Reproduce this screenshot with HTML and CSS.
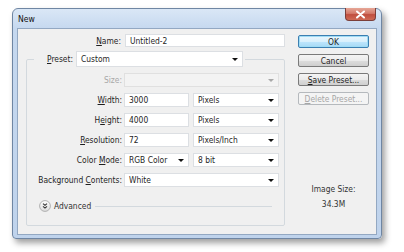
FILE: index.html
```html
<!DOCTYPE html>
<html>
<head>
<meta charset="utf-8">
<link rel="stylesheet" href="styles.css">
</head>
<body>
<div class="window">
  <div class="titlebar">
    <span class="title">New</span>
    <span class="close"><svg width="11" height="9" viewBox="0 0 11 9"><path d="M2 1.5 L9 7.5 M9 1.5 L2 7.5" stroke="#fff" stroke-width="2" stroke-linecap="round"/></svg></span>
  </div>
  <div class="client">
    <div class="main">
      <div class="name-row">
        <span class="lbl name-lbl"><u>N</u>ame:</span>
        <div class="field name-input">Untitled-2</div>
      </div>
      <fieldset class="group">
        <legend class="legend">
          <span class="lbl preset-lbl"><u>P</u>reset:</span>
          <div class="field select preset-select"><span>Custom</span><i class="arrow"></i></div>
        </legend>
        <div class="rows">
          <div class="row">
            <span class="lbl row-lbl dim">Size:</span>
            <div class="field select wide off"><span></span><i class="arrow"></i></div>
          </div>
          <div class="row">
            <span class="lbl row-lbl"><u>W</u>idth:</span>
            <div class="field small">3000</div>
            <div class="field select unit"><span>Pixels</span><i class="arrow"></i></div>
          </div>
          <div class="row">
            <span class="lbl row-lbl">H<u>e</u>ight:</span>
            <div class="field small">4000</div>
            <div class="field select unit"><span>Pixels</span><i class="arrow"></i></div>
          </div>
          <div class="row">
            <span class="lbl row-lbl"><u>R</u>esolution:</span>
            <div class="field small">72</div>
            <div class="field select unit"><span>Pixels/Inch</span><i class="arrow"></i></div>
          </div>
          <div class="row">
            <span class="lbl row-lbl">Color <u>M</u>ode:</span>
            <div class="field select small"><span>RGB Color</span><i class="arrow"></i></div>
            <div class="field select unit"><span>8 bit</span><i class="arrow"></i></div>
          </div>
          <div class="row">
            <span class="lbl row-lbl">Background <u>C</u>ontents:</span>
            <div class="field select wide"><span>White</span><i class="arrow"></i></div>
          </div>
        </div>
        <div class="advanced">
          <svg class="adv-icon" width="12" height="12" viewBox="0 0 12 12">
            <defs><linearGradient id="g" x1="0" y1="0" x2="0" y2="1"><stop offset="0" stop-color="#ffffff"/><stop offset="1" stop-color="#dcdcdc"/></linearGradient></defs>
            <circle cx="6" cy="6" r="5.4" fill="url(#g)" stroke="#a9a9a9" stroke-width="0.9"/>
            <path d="M4 3.6 L6 5.3 L8 3.6 M4 6.4 L6 8.1 L8 6.4" fill="none" stroke="#333" stroke-width="1.1"/>
          </svg>
          <span class="adv-text">Advanced</span>
          <span class="adv-line"></span>
        </div>
      </fieldset>
    </div>
    <div class="side">
      <div class="btn default">OK</div>
      <div class="btn">Cancel</div>
      <div class="btn"><u>S</u>ave Preset...</div>
      <div class="btn disabled"><u>D</u>elete Preset...</div>
      <div class="imgsize">Image Size:</div>
      <div class="imgval">34.3M</div>
    </div>
  </div>
</div>
</body>
</html>
```

FILE: styles.css
```css
* { box-sizing: border-box; }
html, body { margin: 0; padding: 0; background: #ffffff; }
body {
  font-family: "DejaVu Sans Condensed", "DejaVu Sans", sans-serif;
  font-stretch: condensed;
  font-size: 8.4px;
  color: #1e1e1e;
  width: 404px;
  height: 252px;
  overflow: hidden;
}
u { text-decoration: underline; text-underline-offset: 1px; }

.window {
  margin: 8px 0 0 12px;
  width: 370px;
  height: 231px;
  border: 1px solid #6f86a3;
  border-radius: 6px 6px 4px 4px;
  background: linear-gradient(#dae7f6 0px, #c5d8ef 20px, #bfd3ec 100%);
  box-shadow: 3px 4px 6px rgba(0,0,0,0.38);
  display: flex;
  flex-direction: column;
}
.titlebar {
  height: 19px;
  display: flex;
  justify-content: space-between;
  align-items: flex-start;
  padding: 0 5px 0 5px;
}
.title { padding-top: 5px; font-size: 8.6px; line-height: 10px; color: #111; }
.close {
  width: 31px;
  height: 13px;
  margin-top: -1px;
  border: 1px solid #7b3f3a;
  border-top: none;
  border-radius: 0 0 4px 4px;
  background: linear-gradient(#e6a797 0%, #d47a6a 45%, #c04e3e 55%, #cf6a55 100%);
  display: flex;
  align-items: center;
  justify-content: center;
}
.client {
  margin: 0 4px 3px 4px;
  height: 207px;
  border: 1px solid #93a8c2;
  background: #f0f0f0;
  display: flex;
}
.main { width: 268px; }
.name-row {
  display: flex;
  align-items: center;
  margin-top: 5px;
  height: 13px;
}
.lbl { white-space: nowrap; line-height: 10px; }
.name-lbl { width: 103px; text-align: right; margin-right: 4px; }
.field {
  height: 14px;
  background: #ffffff;
  border: 1px solid #dcdfe3;
  display: flex;
  align-items: center;
  padding-left: 4px;
  white-space: nowrap;
  line-height: 10px;
}
.name-input { width: 160px; height: 13px; }

.group {
  margin: 4px 0 0 8px;
  width: 259px;
  padding: 6px 0 13px 0;
  border: 1px solid #d3d9de;
  border-radius: 2px;
}
.legend {
  margin-left: 7px;
  padding: 0 2px;
  display: flex;
  align-items: center;
}
.preset-lbl { width: 37px; text-align: right; margin-right: 3px; }
.preset-select { width: 167px; height: 16px; }

.select { justify-content: space-between; padding-right: 4px; }
.arrow {
  width: 0; height: 0;
  border-left: 3px solid transparent;
  border-right: 3px solid transparent;
  border-top: 3px solid #111;
  margin-top: 1px;
}
.rows { display: flex; flex-direction: column; gap: 6px; }
.row { display: flex; align-items: center; height: 14px; }
.row-lbl { width: 95px; text-align: right; margin-right: 2px; }
.small { width: 65px; }
.unit { width: 86px; margin-left: 4px; }
.wide { width: 155px; }
.off { background: #f3f3f3; border-color: #e0e0e0; }
.off .arrow { border-top-color: #a8a8a8; }
.dim { color: #a8a8a8; }

.advanced {
  display: flex;
  align-items: center;
  height: 12px;
  margin-top: 13px;
  padding-left: 12px;
  padding-right: 12px;
}
.adv-icon { flex: none; }
.adv-text { margin-left: 3px; line-height: 10px; color: #333; }
.adv-line { flex: 1; height: 1px; background: #d3d9de; margin-left: 4px; }

.side {
  margin-left: 12px;
  padding-top: 6px;
  width: 71px;
  display: flex;
  flex-direction: column;
  gap: 6px;
}
.btn {
  height: 13px;
  border: 1px solid #7a7a7a;
  border-radius: 2px;
  background: linear-gradient(#f4f4f4 0%, #ebebeb 50%, #dddddd 51%, #cfcfcf 100%);
  display: flex;
  align-items: center;
  justify-content: center;
  line-height: 10px;
  white-space: nowrap;
}
.btn.default {
  border-color: #3c7fb1;
  background: linear-gradient(#eaf6fd 0%, #d9f0fc 50%, #bee6fd 51%, #a7d9f5 100%);
  box-shadow: inset 0 0 0 1px #9fdcf5;
}
.btn.disabled {
  border-color: #b5b9bd;
  background: #f4f4f4;
  color: #a6a6a6;
}
.imgsize { margin-top: 73px; text-align: center; line-height: 10px; color: #333; }
.imgval { margin-top: -1px; text-align: center; line-height: 10px; color: #333; }
```
